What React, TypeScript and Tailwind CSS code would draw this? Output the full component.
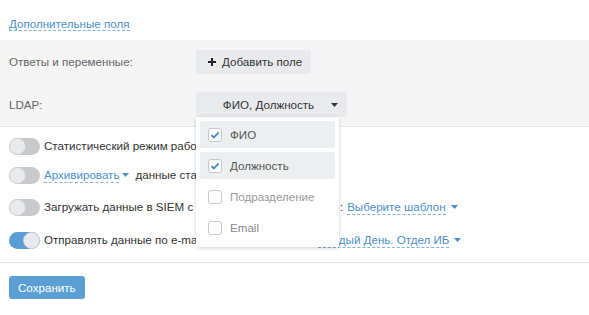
import { ReactNode } from 'react';

const FONT = { fontFamily: '"Liberation Sans", Arial, sans-serif' };

function Caret({ className = '' }: { className?: string }) {
  return (
    <svg className={`inline-block w-[7px] h-[4px] ${className}`} viewBox="0 0 7 4">
      <path d="M0 0h7L3.5 4z" fill="currentColor" />
    </svg>
  );
}

function Toggle({ on = false }: { on?: boolean }) {
  return (
    <span
      className={`relative inline-flex items-center shrink-0 w-[31px] h-[17px] rounded-full ${
        on ? 'bg-[#5b9dd6] justify-end' : 'bg-[#c9c9c9] justify-start'
      }`}
    >
      <span className="w-[17px] h-[17px] rounded-full bg-[#e8eaed] border border-[#cfd2d6]" />
    </span>
  );
}

function Check({ checked }: { checked: boolean }) {
  return (
    <span className="w-[14px] h-[14px] shrink-0 rounded-[3px] border border-[#c7c7c7] bg-white flex items-center justify-center">
      {checked && (
        <svg className="w-[10px] h-[10px]" viewBox="0 0 10 10">
          <path d="M1.5 5.2l2.3 2.3L8.6 2.4" fill="none" stroke="#3f87c9" strokeWidth={1.8} />
        </svg>
      )}
    </span>
  );
}

function DashLink({ children }: { children: ReactNode }) {
  return (
    <span className="text-[#4a8fcb] border-b border-dashed border-[#7fb2de] leading-[14px]">{children}</span>
  );
}

const OPTIONS = [
  { label: 'ФИО', checked: true, color: 'text-[#555]' },
  { label: 'Должность', checked: true, color: 'text-[#555]' },
  { label: 'Подразделение', checked: false, color: 'text-[#999]' },
  { label: 'Email', checked: false, color: 'text-[#888]' },
];

export default function App() {
  return (
    <div className="w-[589px] h-[315px] bg-white text-[11.6px] text-[#333] overflow-hidden" style={FONT}>
      {/* ── Header link ─────────────────────────── */}
      <div className="h-[40px] px-[9px] pt-[15px]">
        <DashLink>Дополнительные поля</DashLink>
      </div>

      {/* ── Grey block ─────────────────────────── */}
      <div className="bg-[#f5f5f5] border-b border-[#e6e6e6] h-[87px] pt-[10px]">
        <div className="flex items-center h-[24px] px-[9px]">
          <span className="w-[187px] text-[#666]">Ответы и переменные:</span>
          <button className="h-[24px] pl-[12px] pr-[9px] rounded-[3px] bg-[#e8eaee] text-[#333] flex items-center gap-[6px]">
            <svg className="w-[8px] h-[8px]" viewBox="0 0 8 8">
              <path d="M4 0v8M0 4h8" stroke="#222" strokeWidth={2} />
            </svg>
            Добавить поле
          </button>
        </div>
        <div className="flex items-center h-[25px] px-[9px] mt-[18px]">
          <span className="w-[187px] text-[#666]">LDAP:</span>
          <div className="relative">
            <button className="w-[151px] h-[25px] rounded-[3px] bg-[#e8eaee] text-[#333] flex items-center pl-[10px] pr-[9px]">
              <span className="flex-1 text-center">ФИО, Должность</span>
              <Caret className="text-[#333]" />
            </button>
            <div className="absolute left-0 top-full z-10 w-[143px] bg-white rounded-b-[3px] shadow-[0_1px_4px_rgba(0,0,0,0.18)] px-[4px] pt-[4px] pb-[6px] flex flex-col gap-[4px]">
              {OPTIONS.map((o) => (
                <div
                  key={o.label}
                  className={`h-[27px] flex items-center gap-[8px] pl-[8px] rounded-[2px] ${o.color} ${
                    o.checked ? 'bg-[#eceff1]' : ''
                  }`}
                >
                  <Check checked={o.checked} />
                  {o.label}
                </div>
              ))}
            </div>
          </div>
        </div>
      </div>

      {/* ── Toggles ─────────────────────────── */}
      <div className="px-[9px] pt-[10px] pb-[13px] border-b border-[#e6e6e6] flex flex-col">
        <div className="flex items-center gap-[4px] h-[18px]">
          <Toggle />
          <span>Статистический режим работы</span>
        </div>
        <div className="flex items-center gap-[4px] h-[18px] mt-[11px]">
          <Toggle />
          <span className="flex items-center gap-[3px]">
            <DashLink>Архивировать</DashLink>
            <Caret className="text-[#4a8fcb]" />
          </span>
          <span className="ml-[2px]">данные статистики</span>
        </div>
        <div className="flex items-center gap-[4px] h-[18px] mt-[14px]">
          <Toggle />
          <span>Загружать данные в SIEM с использованием шаблона&nbsp;:</span>
          <span className="flex items-center gap-[5px]">
            <DashLink>Выберите шаблон</DashLink>
            <Caret className="text-[#4a8fcb]" />
          </span>
        </div>
        <div className="flex items-center gap-[4px] h-[18px] mt-[15px]">
          <Toggle on />
          <span>Отправлять данные по e-mail с периодичностью:</span>
          <span className="flex items-center gap-[5px] ml-[6px]">
            <DashLink>Каждый День. Отдел ИБ</DashLink>
            <Caret className="text-[#4a8fcb]" />
          </span>
        </div>
      </div>

      {/* ── Save ─────────────────────────── */}
      <div className="px-[9px] pt-[13px]">
        <button className="h-[23px] px-[9px] rounded-[3px] bg-[#5aa0d5] text-white">Сохранить</button>
      </div>
    </div>
  );
}
